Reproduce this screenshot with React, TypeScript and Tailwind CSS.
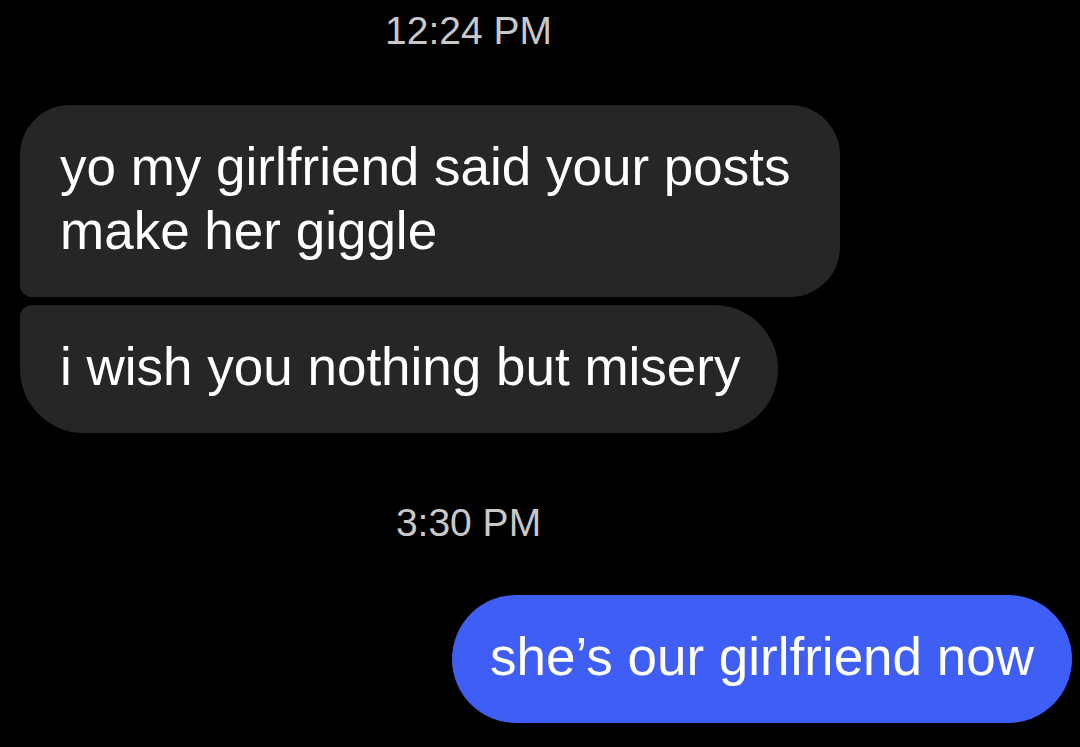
const font = { fontFamily: '"Liberation Sans", Arial, sans-serif' };

function Stamp({ time, className }: { time: string; className?: string }) {
  return (
    <div className={`w-[937px] text-center text-[39px] leading-[38px] text-[#c8c8c8] ${className ?? ""}`}>
      {time}
    </div>
  );
}

export default function App() {
  return (
    <div
      className="flex h-[747px] w-[1080px] flex-col overflow-hidden bg-black text-[53px] leading-[64px] text-white"
      style={font}
    >
      <Stamp time="12:24 PM" className="mt-[12px]" />

      <div className="ml-[20px] mt-[55px] flex flex-col gap-[8px]">
        <div className="h-[192px] w-[820px] rounded-[50px] rounded-bl-[12px] bg-[#262626] pl-[40px] pt-[30px]">
          yo my girlfriend said your posts
          <br />
          make her giggle
        </div>
        <div className="h-[128px] w-[758px] rounded-[64px] rounded-tl-[12px] bg-[#262626] pl-[40px] pt-[30px]">
          i wish you nothing but misery
        </div>
      </div>

      <Stamp time="3:30 PM" className="mt-[71px]" />

      <div className="mr-[8px] mt-[53px] flex h-[128px] w-[620px] self-end rounded-full bg-[#3f5ef6] pl-[38px] pt-[30px]">
        she’s our girlfriend now
      </div>
    </div>
  );
}
